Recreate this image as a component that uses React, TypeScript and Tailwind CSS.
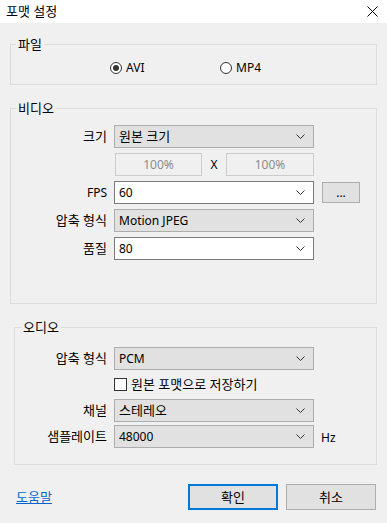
import React from "react";

const font = "font-['Noto_Sans','Noto_Sans_CJK_KR',sans-serif]";
const ko = "text-[13px]";

function Chevron() {
  return (
    <svg width="9" height="5" viewBox="0 0 9 5" className="shrink-0">
      <path d="M0.5 0.5 L4.5 4.5 L8.5 0.5" fill="none" stroke="#333" strokeWidth="1" />
    </svg>
  );
}

function Select({ value, white, korean }: { value: string; white?: boolean; korean?: boolean }) {
  return (
    <div
      className={`w-[200px] h-[23px] flex items-center justify-between pl-[4px] pr-[8px] border ${
        white ? "bg-white border-[#7a7a7a]" : "bg-[#e1e1e1] border-[#adadad]"
      }`}
    >
      <span className={`leading-none ${korean ? ko : ""}`}>{value}</span>
      <Chevron />
    </div>
  );
}

function Row({ label, latin, children }: { label: string; latin?: boolean; children: React.ReactNode }) {
  return (
    <div className="flex items-center">
      <div className={`w-[96px] text-right leading-none ${latin ? "" : ko}`}>{label}</div>
      <div className="w-[7px]" />
      {children}
    </div>
  );
}

export default function App() {
  return (
    <div className={`w-[387px] h-[523px] bg-[#f0f0f0] text-[12px] text-black ${font} overflow-hidden`}>
      {/* Title bar */}
      <div className="h-[23px] bg-white flex items-center justify-between pl-[6px] pr-[9px]">
        <span className={`leading-none ${ko}`}>포맷 설정</span>
        <svg width="11" height="11" viewBox="0 0 11 11">
          <path d="M0.5 0.5 L10.5 10.5 M10.5 0.5 L0.5 10.5" stroke="#000" strokeWidth="1" />
        </svg>
      </div>

      {/* File */}
      <fieldset className="mt-[13px] ml-[10px] w-[367px] border border-[#dcdcdc] p-0">
        <legend className={`ml-[5px] px-[2px] h-[16px] leading-[16px] ${ko}`}>파일</legend>
        <div className="pt-[8px] pb-[8px] h-[32px] flex items-center pl-[99px]">
          <div className="w-[110px] flex items-center gap-[4px]">
            <div className="w-[12px] h-[12px] rounded-full border border-[#333] bg-white flex items-center justify-center">
              <div className="w-[6px] h-[6px] rounded-full bg-[#333]" />
            </div>
            <span className="leading-none">AVI</span>
          </div>
          <div className="flex items-center gap-[4px]">
            <div className="w-[12px] h-[12px] rounded-full border border-[#333] bg-white" />
            <span className="leading-none">MP4</span>
          </div>
        </div>
      </fieldset>

      {/* Video */}
      <fieldset className="mt-[15px] ml-[10px] w-[367px] h-[204px] border border-[#dcdcdc] p-0">
        <legend className={`ml-[5px] px-[2px] h-[16px] leading-[16px] ${ko}`}>비디오</legend>
        <div className="pt-[9px] flex flex-col gap-[5px]">
          <Row label="크기">
            <Select value="원본 크기" korean />
          </Row>
          <div className="flex items-center pl-[104px]">
            <div className="w-[87px] h-[23px] border border-[#cccccc] bg-[#f0f0f0] flex items-center justify-center text-[#8c8c8c] leading-none">
              100%
            </div>
            <div className="w-[24px] text-center leading-none">X</div>
            <div className="w-[88px] h-[23px] border border-[#cccccc] bg-[#f0f0f0] flex items-center justify-center text-[#8c8c8c] leading-none">
              100%
            </div>
          </div>
          <Row label="FPS" latin>
            <Select value="60" white />
            <div className="ml-[8px] w-[38px] h-[21px] bg-[#e1e1e1] border border-[#adadad] flex items-center justify-center leading-none">
              ...
            </div>
          </Row>
          <Row label="압축 형식">
            <Select value="Motion JPEG" />
          </Row>
          <Row label="품질">
            <Select value="80" white />
          </Row>
        </div>
      </fieldset>

      {/* Audio */}
      <fieldset className="mt-[15px] ml-[14px] w-[363px] h-[146px] border border-[#dcdcdc] p-0">
        <legend className={`ml-[6px] px-[2px] h-[16px] leading-[16px] ${ko}`}>오디오</legend>
        <div className="pt-[12px] flex flex-col">
          <div className="-ml-[4px]">
            <Row label="압축 형식">
              <Select value="PCM" />
            </Row>
          </div>
          <div className="flex items-center pl-[99px] mt-[8px] mb-[8px] h-[13px]">
            <div className="w-[13px] h-[13px] border border-[#333] bg-white" />
            <span className={`ml-[4px] leading-none ${ko}`}>원본 포맷으로 저장하기</span>
          </div>
          <div className="-ml-[4px] flex flex-col gap-[3px]">
            <Row label="채널">
              <Select value="스테레오" korean />
            </Row>
            <Row label="샘플레이트">
              <Select value="48000" />
              <span className="ml-[7px] mt-[3px] leading-none">Hz</span>
            </Row>
          </div>
        </div>
      </fieldset>

      {/* Bottom */}
      <div className="mt-[19px] flex items-center pl-[16px]">
        <span className={`text-[#0066cc] underline leading-none w-[172px] ${ko}`}>도움말</span>
        <div className={`w-[90px] h-[26px] border-2 border-[#0078d7] bg-[#e1e1e1] flex items-center justify-center leading-none ${ko}`}>
          확인
        </div>
        <div className={`ml-[8px] w-[90px] h-[26px] border border-[#adadad] bg-[#e1e1e1] flex items-center justify-center leading-none ${ko}`}>
          취소
        </div>
      </div>
    </div>
  );
}
